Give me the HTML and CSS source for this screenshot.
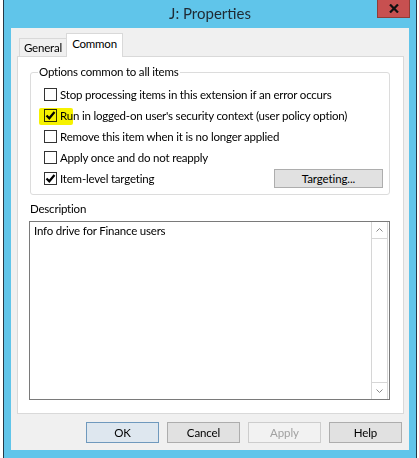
FILE: index.html
```html
<!DOCTYPE html>
<html lang="en">

<head>
    <meta charset="UTF-8">
    <title>J: Properties</title>
    <link rel="stylesheet" href="styles.css">
</head>

<body>
    <div class="window">
        <div class="titlebar">
            <span class="title">J: Properties</span>
            <button class="close">
                <svg width="10" height="9" viewBox="0 0 10 9">
                    <path d="M1 0.5 L9 8.5 M9 0.5 L1 8.5" stroke="#111" stroke-width="2.2" fill="none" />
                </svg>
            </button>
        </div>

        <div class="dialog">
            <div class="tabs">
                <span class="tab">General</span>
                <span class="tab active">Common</span>
            </div>

            <div class="panel">
                <fieldset class="group">
                    <legend>Options common to all items</legend>
                    <div class="options">
                        <label class="option"><span class="box"></span>Stop processing items in this extension if an error occurs</label>
                        <label class="option">
                            <span class="box checked">
                                <svg width="11" height="11" viewBox="0 0 11 11">
                                    <path d="M1.5 5.5 L4.3 8.3 L9.5 2" stroke="#000" stroke-width="2.2" fill="none" />
                                </svg>
                            </span>Run in logged-on user's security context (user policy option)
                            <span class="marker"></span>
                        </label>
                        <label class="option"><span class="box"></span>Remove this item when it is no longer applied</label>
                        <label class="option"><span class="box"></span>Apply once and do not reapply</label>
                        <div class="option last">
                            <label class="option">
                                <span class="box checked">
                                    <svg width="11" height="11" viewBox="0 0 11 11">
                                        <path d="M1.5 5.5 L4.3 8.3 L9.5 2" stroke="#000" stroke-width="2.2" fill="none" />
                                    </svg>
                                </span>Item-level targeting
                            </label>
                            <button class="btn targeting">Targeting...</button>
                        </div>
                    </div>
                </fieldset>

                <div class="desc-label">Description</div>
                <div class="textarea">
                    <div class="text">Info drive for Finance users</div>
                    <div class="scrollbar">
                        <div class="arrow up">
                            <svg width="7" height="4" viewBox="0 0 7 4">
                                <path d="M0.5 3.5 L3.5 0.5 L6.5 3.5" stroke="#8a8a8a" fill="none" />
                            </svg>
                        </div>
                        <div class="track"></div>
                        <div class="arrow down">
                            <svg width="7" height="4" viewBox="0 0 7 4">
                                <path d="M0.5 0.5 L3.5 3.5 L6.5 0.5" stroke="#8a8a8a" fill="none" />
                            </svg>
                        </div>
                    </div>
                </div>
            </div>

            <div class="buttons">
                <button class="btn default">OK</button>
                <button class="btn">Cancel</button>
                <button class="btn" disabled>Apply</button>
                <button class="btn">Help</button>
            </div>
        </div>
    </div>
</body>

</html>
```

FILE: styles.css
```css
body {
    margin: 0;
    background: #fff;
    font-family: Lato, "Noto Sans", sans-serif;
    font-size: 11.5px;
    letter-spacing: -0.2px;
    color: #000;
    overflow: hidden;
}

.window {
    margin-left: 3px;
    width: 412px;
    border-left: 1px solid #263846;
    border-right: 1px solid #263846;
    background: #60c5ea;
    padding-bottom: 8px;
}

.titlebar {
    position: relative;
    height: 28px;
    text-align: center;
}

.title {
    line-height: 26px;
    font-size: 15px;
    letter-spacing: 0;
    color: #1f2a33;
}

.close {
    position: absolute;
    top: 0;
    right: 6px;
    width: 33px;
    height: 18px;
    padding: 0;
    border: 1px solid #8e3d37;
    border-top: none;
    background: #c75050;
    display: flex;
    align-items: center;
    justify-content: center;
}

.dialog {
    margin: 0 7px;
    height: 422px;
    box-sizing: border-box;
    background: #f0f0f0;
    padding-top: 5px;
}

.tabs {
    display: flex;
    align-items: flex-end;
    padding-left: 8px;
    height: 23px;
}

.tab {
    box-sizing: border-box;
    width: 47px;
    height: 18px;
    line-height: 17px;
    text-align: center;
    white-space: nowrap;
    border: 1px solid #d9d9d9;
    border-bottom: none;
    border-right: none;
}

.tab.active {
    width: 57px;
    height: 24px;
    line-height: 20px;
    margin-bottom: -1px;
    border-right: 1px solid #d9d9d9;
    background: #fff;
    position: relative;
    z-index: 1;
}

.panel {
    box-sizing: border-box;
    height: 358px;
    margin: 0 5px 0 6px;
    padding: 7px 13px 0 12px;
    background: #fff;
    border: 1px solid #d9d9d9;
}

.group {
    margin: 0;
    padding: 0;
    border: 1px solid #dcdcdc;
    border-radius: 3px;
    min-width: 0;
}

.group legend {
    margin-left: 7px;
    padding: 0 1px;
    line-height: 16px;
}

.options {
    padding: 4px 6px 5px 13px;
}

.option {
    position: relative;
    display: flex;
    align-items: center;
    height: 21px;
    gap: 3px;
    white-space: nowrap;
}

.option.last {
    justify-content: space-between;
}

.box {
    box-sizing: border-box;
    width: 13px;
    height: 13px;
    border: 1px solid #333;
    background: #fff;
    display: flex;
    align-items: center;
    justify-content: center;
    flex-shrink: 0;
}

.marker {
    position: absolute;
    left: -5px;
    top: 3px;
    width: 34px;
    height: 17px;
    border-radius: 2px;
    background: #f6f200;
    mix-blend-mode: multiply;
}

.btn {
    box-sizing: border-box;
    width: 73px;
    height: 21px;
    padding: 0;
    border: 1px solid #adadad;
    background: #e1e1e1;
    font-family: inherit;
    font-size: 11.5px;
    letter-spacing: -0.1px;
    color: #000;
}

.btn.targeting {
    width: 109px;
    height: 19px;
}

.btn.default {
    border-color: #6f99bd;
    background: #dee7ef;
}

.btn:disabled {
    border-color: #cdcdcd;
    background: #f2f2f2;
    color: #a2a2a2;
}

.desc-label {
    margin-top: 6px;
    line-height: 16px;
}

.textarea {
    display: flex;
    box-sizing: border-box;
    height: 179px;
    margin: 4px 0 0 -1px;
    border: 1px solid #7a7a7a;
}

.text {
    flex: 1;
    padding: 1px 4px;
    line-height: 16px;
}

.scrollbar {
    display: flex;
    flex-direction: column;
    box-sizing: border-box;
    width: 17px;
    margin: 0 1px 0 0;
    border: 1px solid #d6d6d6;
    border-top: none;
    border-bottom: none;
}

.arrow {
    height: 16px;
    display: flex;
    align-items: center;
    justify-content: center;
}

.arrow.up {
    border-bottom: 1px solid #d6d6d6;
}

.arrow.down {
    border-top: 1px solid #d6d6d6;
}

.track {
    flex: 1;
}

.buttons {
    display: flex;
    justify-content: flex-end;
    gap: 8px;
    padding: 8px 7px 0 0;
}
```
